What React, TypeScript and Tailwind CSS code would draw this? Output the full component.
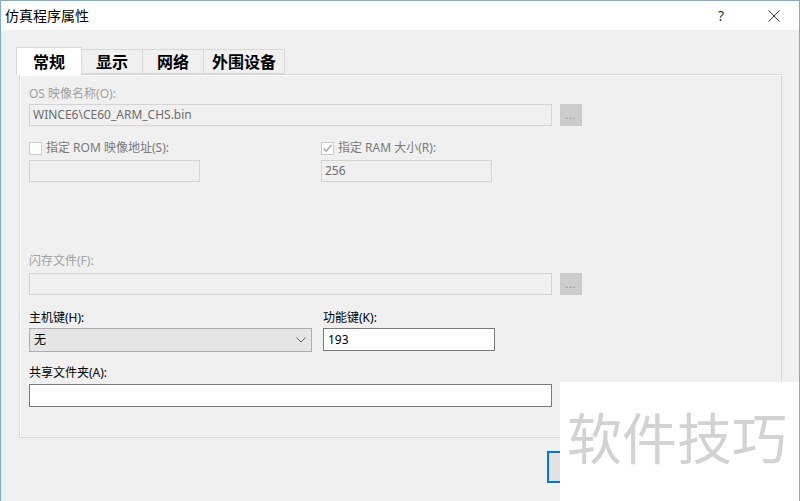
import React from "react";

const font = "font-['Noto_Sans','Noto_Sans_CJK_SC',sans-serif]";

const Tab = ({ label, width, active }: { label: string; width: string; active?: boolean }) => (
  <div
    className={
      active
        ? `${width} h-[28px] -mb-px relative z-10 bg-white border border-b-0 border-[#d9d9d9] flex items-center justify-center font-bold text-[16px] leading-none text-black`
        : `${width} h-[25px] mt-[2px] bg-[#f0f0f0] border border-l-0 border-[#d9d9d9] flex items-center justify-center font-bold text-[16px] leading-none text-black`
    }
  >
    {label}
  </div>
);

const BrowseButton = () => (
  <div className="w-[22px] h-[22px] bg-[#cccccc] flex items-center justify-center text-[10px] leading-none text-[#8a8a8a] tracking-[1px]">
    ...
  </div>
);

const Checkbox = ({ checked }: { checked?: boolean }) => (
  <div className="w-[13px] h-[13px] bg-white border border-[#cccccc] flex items-center justify-center">
    {checked ? (
      <svg width="11" height="11" viewBox="0 0 11 11">
        <path d="M1.5 5.5 L4.2 8.2 L9.5 2" fill="none" stroke="#a8a8a8" strokeWidth="1.4" />
      </svg>
    ) : null}
  </div>
);

export default function App() {
  return (
    <div className={`${font} w-[800px] h-[501px] relative overflow-hidden bg-[#f0f0f0] border-l border-t border-r border-[#7eacd0]`}>
      {/* Title bar */}
      <div className="h-[29px] bg-white flex items-center pl-[4px]">
        <span className="text-[14px] leading-none text-black">仿真程序属性</span>
        <span className="ml-auto mr-[44px] text-[14px] leading-none text-[#333]">?</span>
        <svg className="mr-[19px]" width="12" height="12" viewBox="0 0 12 12">
          <path d="M0.5 0.5 L11.5 11.5 M11.5 0.5 L0.5 11.5" stroke="#333" strokeWidth="1" />
        </svg>
      </div>

      <div className="pl-[15px] pt-[17px]">
        {/* Tabs */}
        <div className="flex items-start">
          <Tab label="常规" width="w-[66px]" active />
          <Tab label="显示" width="w-[61px]" />
          <Tab label="网络" width="w-[61px]" />
          <Tab label="外围设备" width="w-[81px]" />
        </div>

        {/* Panel */}
        <div className="ml-[3px] w-[763px] h-[364px] border border-[#d9d9d9] shadow-[inset_1px_1px_0_#ffffff] px-[9px]">
          <div className="mt-[11px] h-[16px] flex items-center text-[12px] leading-none text-[#a0a0a0]">OS 映像名称(O):</div>
          <div className="mt-[2px] flex items-center gap-[8px]">
            <div className="w-[523px] h-[22px] border border-[#d4d4d4] bg-[#f0f0f0] flex items-center px-[3px] text-[12px] leading-none text-[#6d6d6d]">
              WINCE6\CE60_ARM_CHS.bin
            </div>
            <BrowseButton />
          </div>

          <div className="mt-[14px] flex">
            <div className="w-[292px]">
              <div className="h-[16px] flex items-center gap-[4px] text-[12px] leading-none text-[#7a7a7a]">
                <Checkbox />
                <span>指定 ROM 映像地址(S):</span>
              </div>
              <div className="mt-[4px] w-[171px] h-[22px] border border-[#d4d4d4] bg-[#f0f0f0]" />
            </div>
            <div>
              <div className="h-[16px] flex items-center gap-[4px] text-[12px] leading-none text-[#7a7a7a]">
                <Checkbox checked />
                <span>指定 RAM 大小(R):</span>
              </div>
              <div className="mt-[4px] w-[171px] h-[22px] border border-[#d4d4d4] bg-[#f0f0f0] flex items-center px-[3px] text-[12px] leading-none text-[#6d6d6d]">
                256
              </div>
            </div>
          </div>

          <div className="mt-[71px] h-[16px] flex items-center text-[12px] leading-none text-[#a0a0a0]">闪存文件(F):</div>
          <div className="mt-[4px] flex items-center gap-[8px]">
            <div className="w-[523px] h-[22px] border border-[#d4d4d4] bg-[#f0f0f0]" />
            <BrowseButton />
          </div>

          <div className="mt-[15px] flex">
            <div className="w-[294px]">
              <div className="h-[16px] flex items-center text-[12px] leading-none text-black">主机键(H):</div>
              <div className="mt-[2px] w-[283px] h-[24px] border border-[#adadad] bg-[#e5e5e5] flex items-center pl-[4px] pr-[5px] text-[12px] leading-none text-black">
                <span>无</span>
                <svg className="ml-auto" width="10" height="6" viewBox="0 0 10 6">
                  <path d="M0.5 0.5 L5 5 L9.5 0.5" fill="none" stroke="#606060" strokeWidth="1" />
                </svg>
              </div>
            </div>
            <div>
              <div className="h-[16px] flex items-center text-[12px] leading-none text-black">功能键(K):</div>
              <div className="mt-[2px] w-[172px] h-[23px] border border-[#7a7a7a] bg-white flex items-center px-[4px] text-[12px] leading-none text-black">
                193
              </div>
            </div>
          </div>

          <div className="mt-[13px] h-[16px] flex items-center text-[12px] leading-none text-black">共享文件夹(A):</div>
          <div className="mt-[3px] w-[523px] h-[23px] border border-[#7a7a7a] bg-white" />
        </div>

        {/* Dialog buttons (covered by the overlay) */}
        <div className="mt-[13px] pl-[531px] flex gap-[8px]">
          <div className="w-[75px] h-[32px] border-2 border-[#0078d7] bg-[#e1e1e1]" />
          <div className="w-[75px] h-[32px] border border-[#adadad] bg-[#e1e1e1]" />
        </div>
      </div>

      {/* Watermark overlay */}
      <div className="absolute left-[559px] top-[381px] w-[241px] h-[120px] bg-white flex items-start pl-[7px] pt-[26px]">
        <span className="font-['Noto_Sans_CJK_SC',sans-serif] text-[55px] leading-none text-[#d2d2d2]">软件技巧</span>
      </div>
    </div>
  );
}
